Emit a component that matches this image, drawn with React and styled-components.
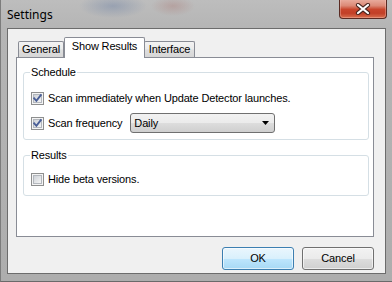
import React from 'react';
import styled, { createGlobalStyle } from 'styled-components';

const Global = createGlobalStyle`
  html, body { margin: 0; padding: 0; background: #b0b0b0; }
  body { font-family: "Liberation Sans", Arial, sans-serif; font-size: 11px; color: #000; letter-spacing: -0.15px; }
  * { box-sizing: border-box; }
`;

const Window = styled.div`
  width: 392px;
  height: 282px;
  display: flex;
  flex-direction: column;
  border-left: 1px solid #7c7c7c;
  border-bottom: 1px solid #6a6a6a;
  background:
    radial-gradient(ellipse 34px 12px at 112px 6px, rgba(110, 130, 165, 0.45), transparent),
    radial-gradient(ellipse 22px 10px at 172px 6px, rgba(170, 115, 110, 0.35), transparent),
    linear-gradient(180deg, #bdbdbd 0%, #b5b5b5 28px, #adadad 100%);
`;

const TitleBar = styled.div`
  height: 28px;
  flex: none;
  display: flex;
  justify-content: space-between;
  align-items: flex-start;
`;

const Title = styled.div`
  padding: 7px 0 0 6px;
  font-family: "Noto Sans", "Open Sans", sans-serif;
  font-size: 12px;
  line-height: 15px;
  letter-spacing: 0;
  color: #000;
`;

const CloseButton = styled.div`
  width: 48px;
  height: 20px;
  margin: -1px 5px 0 0;
  border: 1px solid #5a2a22;
  border-top: none;
  border-radius: 0 0 4px 4px;
  display: flex;
  align-items: center;
  justify-content: center;
  background: linear-gradient(180deg, #eab0a2 0%, #dc8a77 35%, #c8452c 55%, #c23f27 75%, #d8704f 100%);
  box-shadow: inset 0 0 0 1px rgba(255, 210, 200, 0.35);
`;

const Client = styled.div`
  flex: 1;
  margin: 0 6px 7px 6px;
  border: 1px solid #6c6c6c;
  background: #f0f0f0;
  padding: 8px 11px 0 8px;
  display: flex;
  flex-direction: column;
`;

const TabStrip = styled.div`
  height: 20px;
  display: flex;
  align-items: flex-end;
  padding-left: 2px;
`;

const Tab = styled.div`
  width: ${p => p.$w}px;
  height: ${p => (p.$active ? 21 : 16)}px;
  margin-bottom: ${p => (p.$active ? -1 : 0)}px;
  margin-left: ${p => p.$ml || 0}px;
  border: 1px solid #898c95;
  border-bottom: none;
  border-radius: 2px 2px 0 0;
  position: relative;
  z-index: ${p => (p.$active ? 1 : 0)};
  background: ${p =>
    p.$active ? '#ffffff' : 'linear-gradient(180deg, #f3f3f3 0%, #ebebeb 45%, #dedede 55%, #d6d6d6 100%)'};
  display: flex;
  align-items: center;
  justify-content: center;
  padding-bottom: ${p => (p.$active ? 3 : 0)}px;
  line-height: 13px;
  white-space: nowrap;
`;

const Panel = styled.div`
  width: 358px;
  height: 180px;
  background: #fff;
  border: 1px solid #898c95;
  padding: 8px 0 0 6px;
`;

const Group = styled.fieldset`
  width: 346px;
  margin: ${p => p.$mt || 0}px 0 0 0;
  border: 1px solid #d5dfe5;
  border-radius: 3px;
  padding: 0 0 ${p => p.$pb}px 7px;
  min-inline-size: 0;
`;

const Legend = styled.legend`
  padding: 0 1px;
  margin-left: -1px;
  line-height: 13px;
  font-size: 11px;
`;

const Rows = styled.div`
  display: flex;
  flex-direction: column;
  gap: 8px;
  padding-top: ${p => p.$pt}px;
`;

const Row = styled.div`
  display: flex;
  align-items: center;
  min-height: 13px;
  line-height: 13px;
`;

const Label = styled.span`
  margin-left: 4px;
  white-space: nowrap;
`;

const Select = styled.div`
  width: 145px;
  height: 20px;
  margin-left: ${p => p.$ml}px;
  border: 1px solid #707070;
  border-radius: 3px;
  background: linear-gradient(180deg, #f2f2f2 0%, #ebebeb 50%, #dddddd 51%, #cfcfcf 100%);
  display: flex;
  align-items: center;
  justify-content: space-between;
  padding: 0 5px 0 3px;
`;

const ButtonRow = styled.div`
  display: flex;
  justify-content: flex-end;
  gap: 8px;
  margin-top: 10px;
`;

const Button = styled.div`
  width: 72px;
  height: 23px;
  border: 1px solid ${p => (p.$primary ? '#3c7fb1' : '#707070')};
  border-radius: 3px;
  display: flex;
  align-items: center;
  justify-content: center;
  background: ${p =>
    p.$primary
      ? 'linear-gradient(180deg, #eaf6fd 0%, #d9f0fc 50%, #bee6fd 51%, #a7d9f5 100%)'
      : 'linear-gradient(180deg, #f2f2f2 0%, #ebebeb 50%, #dddddd 51%, #cfcfcf 100%)'};
  box-shadow: inset 0 0 0 1px rgba(255, 255, 255, 0.6);
  line-height: 13px;
`;

const CheckBox = ({ checked }) => (
  <svg width="13" height="13" viewBox="0 0 13 13" style={{ flex: 'none', display: 'block' }}>
    <defs>
      <linearGradient id="cbg" x1="0" y1="0" x2="1" y2="1">
        <stop offset="0" stopColor="#cbcfd5" />
        <stop offset="1" stopColor="#f7f7f7" />
      </linearGradient>
    </defs>
    <rect x="0.5" y="0.5" width="12" height="12" fill="#f4f4f4" stroke="#8e8f8f" />
    <rect x="2.5" y="2.5" width="8" height="8" fill="url(#cbg)" stroke="#b3b7bd" />
    {checked && (
      <path d="M3.2 6.4 L5.4 8.8 L9.8 3.2" fill="none" stroke="#4a5f97" strokeWidth="1.9" strokeLinecap="square" />
    )}
  </svg>
);

const Arrow = () => (
  <svg width="7" height="4" viewBox="0 0 7 4" style={{ display: 'block' }}>
    <polygon points="0,0 7,0 3.5,4" fill="#000" />
  </svg>
);

const CloseX = () => (
  <svg width="16" height="12" viewBox="0 0 16 12" style={{ display: 'block' }}>
    <path d="M3 2 L13 10 M13 2 L3 10" stroke="#4a2620" strokeWidth="4.2" strokeLinecap="round" />
    <path d="M3 2 L13 10 M13 2 L3 10" stroke="#ffffff" strokeWidth="2.2" strokeLinecap="round" />
  </svg>
);

export default function App() {
  return (
    <>
      <Global />
      <Window>
        <TitleBar>
          <Title>Settings</Title>
          <CloseButton>
            <CloseX />
          </CloseButton>
        </TitleBar>
        <Client>
          <TabStrip>
            <Tab $w={46}>General</Tab>
            <Tab $w={81} $active>Show Results</Tab>
            <Tab $w={51} $ml={-1}>Interface</Tab>
          </TabStrip>
          <Panel>
            <Group $pb={6}>
              <Legend>Schedule</Legend>
              <Rows $pt={13}>
                <Row>
                  <CheckBox checked />
                  <Label>Scan immediately when Update Detector launches.</Label>
                </Row>
                <Row>
                  <CheckBox checked />
                  <Label>Scan frequency</Label>
                  <Select $ml={8}>
                    <span>Daily</span>
                    <Arrow />
                  </Select>
                </Row>
              </Rows>
            </Group>
            <Group $mt={9} $pb={9}>
              <Legend>Results</Legend>
              <Rows $pt={11}>
                <Row>
                  <CheckBox />
                  <Label>Hide beta versions.</Label>
                </Row>
              </Rows>
            </Group>
          </Panel>
          <ButtonRow>
            <Button $primary>OK</Button>
            <Button>Cancel</Button>
          </ButtonRow>
        </Client>
      </Window>
    </>
  );
}
